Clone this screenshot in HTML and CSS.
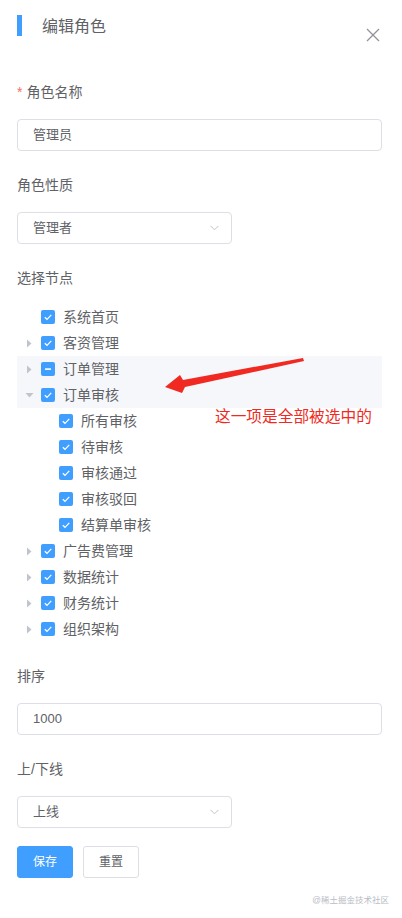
FILE: index.html
```html
<!DOCTYPE html>
<html lang="zh-CN">
<head>
<meta charset="utf-8">
<title>编辑角色</title>
<link rel="stylesheet" href="styles.css">
</head>
<body>
<div class="page">
  <div class="header">
    <div class="title-wrap">
      <span class="bar"></span>
      <span class="title">编辑角色</span>
    </div>
    <svg class="close" width="14" height="14" viewBox="0 0 14 14"><path d="M1 1L13 13M13 1L1 13" stroke="#909399" stroke-width="1.3" fill="none"/></svg>
  </div>

  <form class="form">
    <div class="item">
      <div class="label"><span class="req">*</span>角色名称</div>
      <div class="input full">管理员</div>
    </div>
    <div class="item">
      <div class="label">角色性质</div>
      <div class="input select">管理者<svg class="chev" width="9" height="6" viewBox="0 0 9 6"><path d="M0.5 0.8L4.5 4.8L8.5 0.8" stroke="#c0c4cc" stroke-width="1" fill="none"/></svg></div>
    </div>
    <div class="item">
      <div class="label">选择节点</div>
      <div class="tree">
        <div class="node"><span class="exp"></span><span class="cb"><svg width="14" height="14" viewBox="0 0 14 14"><path d="M3.8 7.2L6 9.3L10.3 4.8" stroke="#fff" stroke-width="1.2" fill="none"/></svg></span><span class="txt">系统首页</span></div>
        <div class="node"><span class="exp"><svg width="6" height="9" viewBox="0 0 6 9"><path d="M1 0.5L5.5 4.5L1 8.5Z" fill="#c0c4cc"/></svg></span><span class="cb"><svg width="14" height="14" viewBox="0 0 14 14"><path d="M3.8 7.2L6 9.3L10.3 4.8" stroke="#fff" stroke-width="1.2" fill="none"/></svg></span><span class="txt">客资管理</span></div>
        <div class="node hl"><span class="exp"><svg width="6" height="9" viewBox="0 0 6 9"><path d="M1 0.5L5.5 4.5L1 8.5Z" fill="#c0c4cc"/></svg></span><span class="cb"><svg width="14" height="14" viewBox="0 0 14 14"><rect x="4" y="6.3" width="6" height="1.6" fill="#fff"/></svg></span><span class="txt">订单管理</span></div>
        <div class="node hl"><span class="exp"><svg width="9" height="6" viewBox="0 0 9 6"><path d="M0.5 1L8.5 1L4.5 5.5Z" fill="#c0c4cc"/></svg></span><span class="cb"><svg width="14" height="14" viewBox="0 0 14 14"><path d="M3.8 7.2L6 9.3L10.3 4.8" stroke="#fff" stroke-width="1.2" fill="none"/></svg></span><span class="txt">订单审核</span></div>
        <div class="node child"><span class="exp"></span><span class="cb"><svg width="14" height="14" viewBox="0 0 14 14"><path d="M3.8 7.2L6 9.3L10.3 4.8" stroke="#fff" stroke-width="1.2" fill="none"/></svg></span><span class="txt">所有审核</span></div>
        <div class="node child"><span class="exp"></span><span class="cb"><svg width="14" height="14" viewBox="0 0 14 14"><path d="M3.8 7.2L6 9.3L10.3 4.8" stroke="#fff" stroke-width="1.2" fill="none"/></svg></span><span class="txt">待审核</span></div>
        <div class="node child"><span class="exp"></span><span class="cb"><svg width="14" height="14" viewBox="0 0 14 14"><path d="M3.8 7.2L6 9.3L10.3 4.8" stroke="#fff" stroke-width="1.2" fill="none"/></svg></span><span class="txt">审核通过</span></div>
        <div class="node child"><span class="exp"></span><span class="cb"><svg width="14" height="14" viewBox="0 0 14 14"><path d="M3.8 7.2L6 9.3L10.3 4.8" stroke="#fff" stroke-width="1.2" fill="none"/></svg></span><span class="txt">审核驳回</span></div>
        <div class="node child"><span class="exp"></span><span class="cb"><svg width="14" height="14" viewBox="0 0 14 14"><path d="M3.8 7.2L6 9.3L10.3 4.8" stroke="#fff" stroke-width="1.2" fill="none"/></svg></span><span class="txt">结算单审核</span></div>
        <div class="node"><span class="exp"><svg width="6" height="9" viewBox="0 0 6 9"><path d="M1 0.5L5.5 4.5L1 8.5Z" fill="#c0c4cc"/></svg></span><span class="cb"><svg width="14" height="14" viewBox="0 0 14 14"><path d="M3.8 7.2L6 9.3L10.3 4.8" stroke="#fff" stroke-width="1.2" fill="none"/></svg></span><span class="txt">广告费管理</span></div>
        <div class="node"><span class="exp"><svg width="6" height="9" viewBox="0 0 6 9"><path d="M1 0.5L5.5 4.5L1 8.5Z" fill="#c0c4cc"/></svg></span><span class="cb"><svg width="14" height="14" viewBox="0 0 14 14"><path d="M3.8 7.2L6 9.3L10.3 4.8" stroke="#fff" stroke-width="1.2" fill="none"/></svg></span><span class="txt">数据统计</span></div>
        <div class="node"><span class="exp"><svg width="6" height="9" viewBox="0 0 6 9"><path d="M1 0.5L5.5 4.5L1 8.5Z" fill="#c0c4cc"/></svg></span><span class="cb"><svg width="14" height="14" viewBox="0 0 14 14"><path d="M3.8 7.2L6 9.3L10.3 4.8" stroke="#fff" stroke-width="1.2" fill="none"/></svg></span><span class="txt">财务统计</span></div>
        <div class="node"><span class="exp"><svg width="6" height="9" viewBox="0 0 6 9"><path d="M1 0.5L5.5 4.5L1 8.5Z" fill="#c0c4cc"/></svg></span><span class="cb"><svg width="14" height="14" viewBox="0 0 14 14"><path d="M3.8 7.2L6 9.3L10.3 4.8" stroke="#fff" stroke-width="1.2" fill="none"/></svg></span><span class="txt">组织架构</span></div>

        <svg class="anno-arrow" width="150" height="40" viewBox="160 355 150 40"><path d="M165 388L180 376L183 381L303 359L304 362L185 388L182 394Z" fill="#f02a22"/></svg>
        <div class="anno-text">这一项是全部被选中的</div>
      </div>
    </div>
    <div class="item">
      <div class="label">排序</div>
      <div class="input full">1000</div>
    </div>
    <div class="item">
      <div class="label">上/下线</div>
      <div class="input select">上线<svg class="chev" width="9" height="6" viewBox="0 0 9 6"><path d="M0.5 0.8L4.5 4.8L8.5 0.8" stroke="#c0c4cc" stroke-width="1" fill="none"/></svg></div>
    </div>
    <div class="buttons">
      <span class="btn primary">保存</span>
      <span class="btn">重置</span>
    </div>
  </form>
  <div class="watermark">@稀土掘金技术社区</div>
</div>
</body>
</html>
```

FILE: styles.css
```css
* { box-sizing: border-box; }
html, body { margin: 0; padding: 0; background: #fff; }
body {
  font-family: "Liberation Sans", "Noto Sans CJK SC", sans-serif;
  color: #606266;
  width: 402px;
  height: 918px;
  overflow: hidden;
}
.page {
  position: relative;
  height: 918px;
  padding: 15px 20px 0 17px;
}
.header {
  display: flex;
  justify-content: space-between;
  align-items: flex-start;
  height: 27px;
}
.title-wrap { display: flex; align-items: flex-start; }
.bar {
  width: 5px;
  height: 21px;
  background: #409eff;
}
.title {
  margin-left: 20px;
  font-size: 16px;
  line-height: 24px;
  color: #606266;
}
.close { margin-top: 13px; margin-right: 2px; }

.form { padding-top: 39px; margin: 0; }
.item { margin-bottom: 23px; }
.label {
  font-size: 14px;
  line-height: 22px;
  height: 22px;
  margin-bottom: 16px;
  color: #606266;
}
.req { color: #f56c6c; margin-right: 4px; }
.input {
  height: 32px;
  border: 1px solid #dcdfe6;
  border-radius: 4px;
  padding: 0 15px;
  font-size: 13px;
  line-height: 30px;
  color: #606266;
}
.full { width: 100%; }
.select {
  width: 215px;
  display: flex;
  justify-content: space-between;
  align-items: center;
  padding-right: 12px;
}
.chev { display: block; }

.tree { position: relative; margin-top: -1px; }
.node {
  display: flex;
  align-items: center;
  height: 26px;
  font-size: 14px;
}
.node.hl { background: #f5f7fa; }
.node.child { padding-left: 18px; }
.exp {
  width: 24px;
  height: 26px;
  display: flex;
  align-items: center;
  justify-content: center;
}
.exp svg { display: block; }
.cb {
  width: 14px;
  height: 14px;
  border-radius: 2px;
  background: #409eff;
  margin-right: 8px;
}
.cb svg { display: block; }
.txt { line-height: 26px; color: #606266; }

.anno-arrow {
  position: absolute;
  left: 143px;
  top: 50px;
}
.anno-text {
  position: absolute;
  left: 198px;
  top: 101px;
  font-size: 15.7px;
  line-height: 24px;
  color: #f02a22;
  white-space: nowrap;
}

.buttons {
  display: flex;
  gap: 10px;
  margin-top: -5px;
}
.btn {
  height: 32px;
  padding: 0 15px;
  border: 1px solid #dcdfe6;
  border-radius: 3px;
  font-size: 12px;
  line-height: 30px;
  color: #606266;
  background: #fff;
}
.btn.primary {
  background: #409eff;
  border-color: #409eff;
  color: #fff;
}
.watermark {
  position: absolute;
  right: 13px;
  top: 894px;
  font-size: 8.5px;
  line-height: 12px;
  color: #b8bcc4;
}
```
